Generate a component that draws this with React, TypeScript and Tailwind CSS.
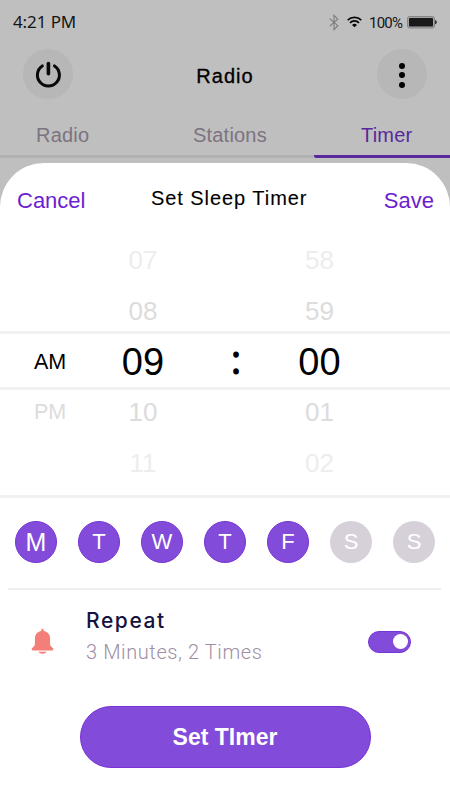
import clsx from 'clsx';

const days = [
  { label: 'M', active: true },
  { label: 'T', active: true },
  { label: 'W', active: true },
  { label: 'T', active: true },
  { label: 'F', active: true },
  { label: 'S', active: false },
  { label: 'S', active: false },
];

function StatusBar() {
  return (
    <div className="flex h-[44px] items-center justify-between pl-[13px] pr-[13px]">
      <span className="font-['Noto_Sans','Open_Sans',sans-serif] text-[17px] leading-5 tracking-[-0.1px] text-[#151515]">4:21 PM</span>
      <div className="flex items-center">
        <svg width="10" height="17" viewBox="0 0 10 17" fill="none" stroke="#7c7c7c" strokeWidth="1.1">
          <path d="M.7 4.7 8.8 11.7 5 15.7V1.3L8.8 5.2.7 12.2" />
        </svg>
        <svg className="ml-[8px]" width="15" height="12" viewBox="0 0 15 12" fill="none" stroke="#080808" strokeWidth="1.8">
          <path d="M.7 4.2a9.8 9.8 0 0 1 13.6 0M3 6.8a6.4 6.4 0 0 1 9 0" />
          <path d="M7.5 11.3 5 8.9a3.6 3.6 0 0 1 5 0z" fill="#080808" stroke="none" />
        </svg>
        <span className="ml-[7px] w-[34px] whitespace-nowrap pt-px font-['Roboto',sans-serif] text-[15px] leading-5 tracking-[-0.8px] text-[#151515]">100%</span>
        <svg className="ml-[4px]" width="30" height="13" viewBox="0 0 30 13">
          <rect x=".5" y=".5" width="27" height="11.5" rx="2" fill="#a4a4a4" stroke="#858585" />
          <rect x="2" y="2" width="24" height="8.5" rx=".8" fill="#191919" />
          <path d="M28 4q1.8.6 1.8 2.2T28 8.5z" fill="#303030" />
        </svg>
      </div>
    </div>
  );
}

function Header() {
  return (
    <div className="flex items-center justify-between pb-[14px] pl-[23px] pr-[23px] pt-[5px]">
      <button className="flex size-[50px] items-center justify-center rounded-full bg-[#b7b7b7]">
        <svg width="28" height="28" viewBox="0 0 28 28" fill="none" stroke="#090909" strokeWidth="3" strokeLinecap="round">
          <path d="M8.3 5.9a11 11 0 1 0 12.2 0" />
          <path d="M14.4 3.6v10.2" strokeWidth="3.6" />
        </svg>
      </button>
      <h1 className="pt-[3px] text-[20px] leading-6 tracking-[1px] text-black [-webkit-text-stroke:0.3px_black]">Radio</h1>
      <button className="flex size-[50px] flex-col items-center justify-center gap-[3.5px] rounded-full bg-[#b7b7b7] pt-[2px]">
        <span className="size-[6px] rounded-full bg-black" />
        <span className="size-[6px] rounded-full bg-black" />
        <span className="size-[6px] rounded-full bg-black" />
      </button>
    </div>
  );
}

function Tabs() {
  return (
    <div className="grid h-[45px] grid-cols-[154px_160px_136px] grid-rows-[45px] text-[20px] leading-[44px] tracking-[0.2px] text-[#7c7380]">
      <div className="border-b-[3px] border-[#b1b1b1] pl-[36px]">Radio</div>
      <div className="border-b-[3px] border-[#b1b1b1] pl-[39px]">Stations</div>
      <div className="rounded-l-[2px] border-b-[3px] border-[#59289f] pl-[47px] text-[#59289f]">Timer</div>
    </div>
  );
}

function TimePicker() {
  return (
    <div className="text-[26px] text-[#dcdcdc]">
      <div className="grid grid-cols-[100px_86px_100px_67px] grid-rows-[51px_51px] text-center leading-[51px]">
        <span className="col-start-2 text-[#ededed]">07</span>
        <span className="col-start-4 text-[#ededed]">58</span>
        <span className="col-start-2">08</span>
        <span className="col-start-4">59</span>
      </div>
      <div className="mt-[-6px] grid h-[59px] grid-cols-[100px_86px_100px_67px] items-center border-y-[3px] border-[#f1f1f1] text-center text-[38px] leading-[49px] text-black">
        <span className="pt-[4px] text-[21.5px]">AM</span>
        <span className="pt-[3px]">09</span>
        <span className="mt-[-4px] font-['Open_Sans',sans-serif] text-[40px] [-webkit-text-stroke:1px_black]">:</span>
        <span className="pt-[3px]">00</span>
      </div>
      <div className="mt-[-3px] grid grid-cols-[100px_86px_100px_67px] grid-rows-[51px_51px] text-center leading-[51px]">
        <span className="text-[21.5px]">PM</span>
        <span>10</span>
        <span className="col-start-4">01</span>
        <span className="col-start-2 text-[#ededed]">11</span>
        <span className="col-start-4 text-[#ededed]">02</span>
      </div>
    </div>
  );
}

function DayPicker() {
  return (
    <div className="flex justify-between px-[15px] pt-[23px]">
      {days.map((day, i) => (
        <button
          key={i}
          className={clsx(
            'flex size-[42px] items-center justify-center rounded-full text-white',
            day.active ? 'border border-[#7834d5] bg-[#824bd9]' : 'bg-[#d6d1d9]',
            i === 0 ? 'pt-px text-[25px]' : 'pb-px text-[22px]',
          )}
        >
          {day.label}
        </button>
      ))}
    </div>
  );
}

function RepeatRow() {
  return (
    <div className="flex h-[116px] pl-[31px] pr-[39px]">
      <svg className="mt-[38px] shrink-0" width="23" height="28" viewBox="0 0 23 28" fill="#f47e7a">
        <path d="M11.5.8c.8 0 1.2.6 1.2 1.5v.8c3.8.6 6.4 3.6 6.4 7.5v5.2c0 1.7.9 2.9 2.2 3.6 1.5.8 1.4 3.1-.4 3.1H2.1c-1.8 0-1.9-2.3-.4-3.1 1.3-.7 2.2-1.9 2.2-3.6v-5.2c0-3.9 2.6-6.9 6.4-7.5v-.8c0-.9.4-1.5 1.2-1.5z" />
        <path d="M7.2 23.8h8.6a4.8 3.4 0 0 1-8.6 0z" />
      </svg>
      <div className="ml-[32px] flex-1 pt-[18px]">
        <div className="font-['Inter',sans-serif] text-[21px] font-medium leading-[26px] tracking-[1.6px] text-[#14123f]">Repeat</div>
        <div className="mt-[4px] font-['Roboto',sans-serif] text-[20px] font-light leading-7 tracking-[0.6px] text-[#9d90a2]">3 Minutes, 2 Times</div>
      </div>
      <button className="mt-[41px] flex h-[22px] w-[43px] items-center justify-end rounded-full border border-[#7834d5] bg-[#824bd9] pb-px pr-[2px]">
        <span className="size-[15px] rounded-full bg-white" />
      </button>
    </div>
  );
}

export default function App() {
  return (
    <div className="h-[800px] w-[450px] overflow-hidden bg-[#bfbfbf] font-['Liberation_Sans',Arial,sans-serif]">
      <StatusBar />
      <Header />
      <Tabs />
      <div className="mt-[5px] h-[637px] rounded-t-[44px] bg-white">
        <div className="flex h-[72px] justify-between pl-[17px] pr-[16px] text-[22px] leading-[28px] text-[#6c1ed0]">
          <button className="self-start pt-[24px]">Cancel</button>
          <h2 className="pr-[11px] pt-[21px] text-[20px] tracking-[0.95px] text-black [-webkit-text-stroke:0.1px_black]">Set Sleep Timer</h2>
          <button className="self-start pt-[24px]">Save</button>
        </div>
        <TimePicker />
        <div className="mt-[6px] h-[3px] bg-[#f1f1f1]" />
        <DayPicker />
        <div className="ml-[8px] mr-[9px] mt-[25px] h-[2px] bg-[#efefef]" />
        <RepeatRow />
        <button className="mx-auto block h-[62px] w-[291px] rounded-full border border-[#7834d5] bg-[#824bd9] text-[23px] font-bold text-white">
          Set TImer
        </button>
      </div>
    </div>
  );
}
